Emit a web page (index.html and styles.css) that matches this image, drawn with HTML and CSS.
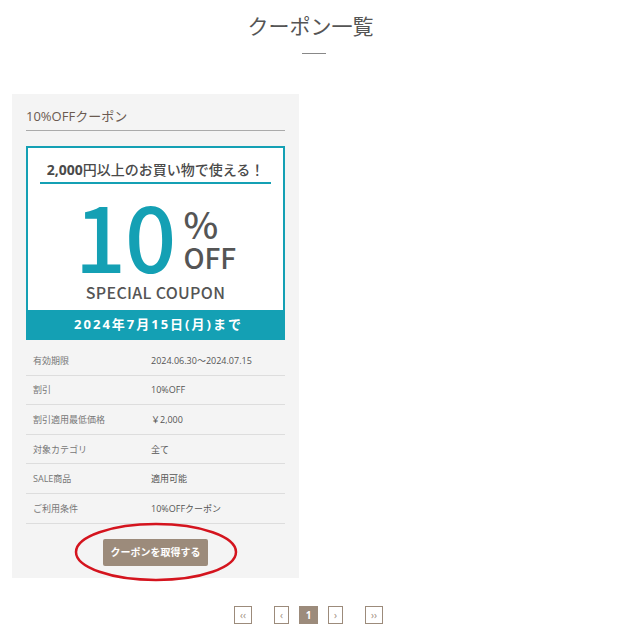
FILE: index.html
```html
<!DOCTYPE html>
<html lang="ja">
<head>
    <meta charset="UTF-8">
    <title>クーポン一覧</title>
    <link rel="stylesheet" href="styles.css">
</head>
<body>
<div id="page">
    <h1 class="page-title">クーポン一覧</h1>
    <div class="title-rule"></div>

    <div class="card">
        <div class="card-title">10%OFFクーポン</div>

        <div class="coupon">
            <div class="coupon-head"><b>2,000</b>円以上のお買い物で使える！</div>
            <div class="coupon-rate">
                <span class="rate-num">10</span>
                <span class="rate-unit">
                    <span class="rate-pct">%</span>
                    <span class="rate-off">OFF</span>
                </span>
            </div>
            <div class="coupon-sub">SPECIAL COUPON</div>
            <div class="coupon-limit">2024年7月15日(月)まで</div>
        </div>

        <table class="info">
            <tr><th>有効期限</th><td>2024.06.30～2024.07.15</td></tr>
            <tr><th>割引</th><td>10%OFF</td></tr>
            <tr><th>割引適用最低価格</th><td>￥2,000</td></tr>
            <tr><th>対象カテゴリ</th><td>全て</td></tr>
            <tr><th>SALE商品</th><td>適用可能</td></tr>
            <tr><th>ご利用条件</th><td>10%OFFクーポン</td></tr>
        </table>

        <div class="btn-wrap">
            <a class="btn" href="#">クーポンを取得する</a>
        </div>

        <svg class="mark" width="166" height="64" viewBox="0 0 166 64">
            <ellipse cx="83" cy="31" rx="80" ry="28" fill="none" stroke="#d4141e" stroke-width="2.5"/>
        </svg>
    </div>

    <div class="pager">
        <a class="pg pg-wide pg-first" href="#">&lsaquo;&lsaquo;</a>
        <a class="pg" href="#">&lsaquo;</a>
        <span class="pg pg-on">1</span>
        <a class="pg" href="#">&rsaquo;</a>
        <a class="pg pg-wide pg-last" href="#">&rsaquo;&rsaquo;</a>
    </div>
</div>
</body>
</html>
```

FILE: styles.css
```css
body {
    margin: 0;
    background: #fff;
    color: #555;
    font-family: "Open Sans", "Noto Sans CJK JP", sans-serif;
}

#page {
    width: 627px;
    padding-top: 11px;
}

.page-title {
    margin: 0;
    padding-right: 6px;
    text-align: center;
    font-size: 21px;
    font-weight: normal;
    line-height: 30px;
    color: #555;
}

.title-rule {
    width: 24px;
    height: 1px;
    margin: 12px auto 0;
    background: #888;
}

.card {
    position: relative;
    width: 259px;
    margin: 40px 0 0 12px;
    padding: 12px 14px 12px;
    background: #f4f4f4;
}

.card-title {
    font-size: 13px;
    line-height: 20px;
    color: #6b5a50;
    padding-bottom: 4px;
    border-bottom: 1px solid #aaa;
}

.coupon {
    margin-top: 15px;
    border: 2px solid #14a0b4;
    background: #fff;
}

.coupon-head {
    margin: 0 12px;
    padding: 12px 0 2px;
    text-align: center;
    font-size: 14px;
    font-weight: 500;
    line-height: 20px;
    color: #4a4a4a;
    border-bottom: 2px solid #14a0b4;
}

.coupon-head b {
    font-weight: bold;
}

.coupon-rate {
    display: flex;
    justify-content: center;
    margin-top: 5px;
    font-family: "Noto Sans CJK JP", sans-serif;
    font-weight: 500;
}

.rate-num {
    font-size: 90px;
    line-height: 90px;
    color: #14a0b4;
    letter-spacing: -1px;
}

.rate-unit {
    display: flex;
    flex-direction: column;
    margin-left: 8px;
    padding-top: 15px;
    color: #555;
}

.rate-pct {
    font-size: 37px;
    line-height: 38px;
}

.rate-off {
    font-size: 28px;
    line-height: 30px;
}

.coupon-sub {
    text-align: center;
    font-family: "Noto Sans CJK JP", sans-serif;
    font-weight: 500;
    font-size: 16px;
    line-height: 20px;
    letter-spacing: 0.3px;
    color: #555;
    margin-top: 3px;
}

.coupon-limit {
    margin-top: 8px;
    background: #14a0b4;
    color: #fff;
    text-align: center;
    font-size: 13px;
    font-weight: bold;
    line-height: 28px;
    letter-spacing: 2px;
    padding-left: 6px;
}

.info {
    width: 100%;
    margin-top: 6px;
    border-collapse: collapse;
    font-size: 9px;
}

.info th,
.info td {
    height: 28.6px;
    padding: 0;
    border-bottom: 1px solid #ddd;
    text-align: left;
    vertical-align: middle;
}

.info th {
    width: 118px;
    padding-left: 7px;
    font-weight: normal;
    color: #777;
}

.info td {
    color: #555;
}

.btn-wrap {
    margin-top: 15px;
    text-align: center;
}

.btn {
    display: inline-block;
    width: 105px;
    height: 27px;
    line-height: 27px;
    border-radius: 2px;
    background: #9c8b7b;
    color: #fff;
    font-size: 10px;
    font-weight: bold;
    text-decoration: none;
}

.mark {
    position: absolute;
    left: 61px;
    top: 427px;
}

.pager {
    display: flex;
    justify-content: center;
    align-items: center;
    margin-top: 28px;
    padding-right: 10px;
}

.pg {
    box-sizing: border-box;
    width: 15px;
    height: 18px;
    margin: 0 5px;
    border: 1px solid #9c8b7b;
    color: #9c8b7b;
    font-size: 10px;
    line-height: 16px;
    text-align: center;
    text-decoration: none;
}

.pg-wide {
    width: 18px;
}

.pg-first {
    margin-right: 17px;
}

.pg-last {
    margin-left: 17px;
}

.pg-on {
    width: 19px;
    background: #9c8b7b;
    color: #fff;
    font-weight: bold;
}
```
